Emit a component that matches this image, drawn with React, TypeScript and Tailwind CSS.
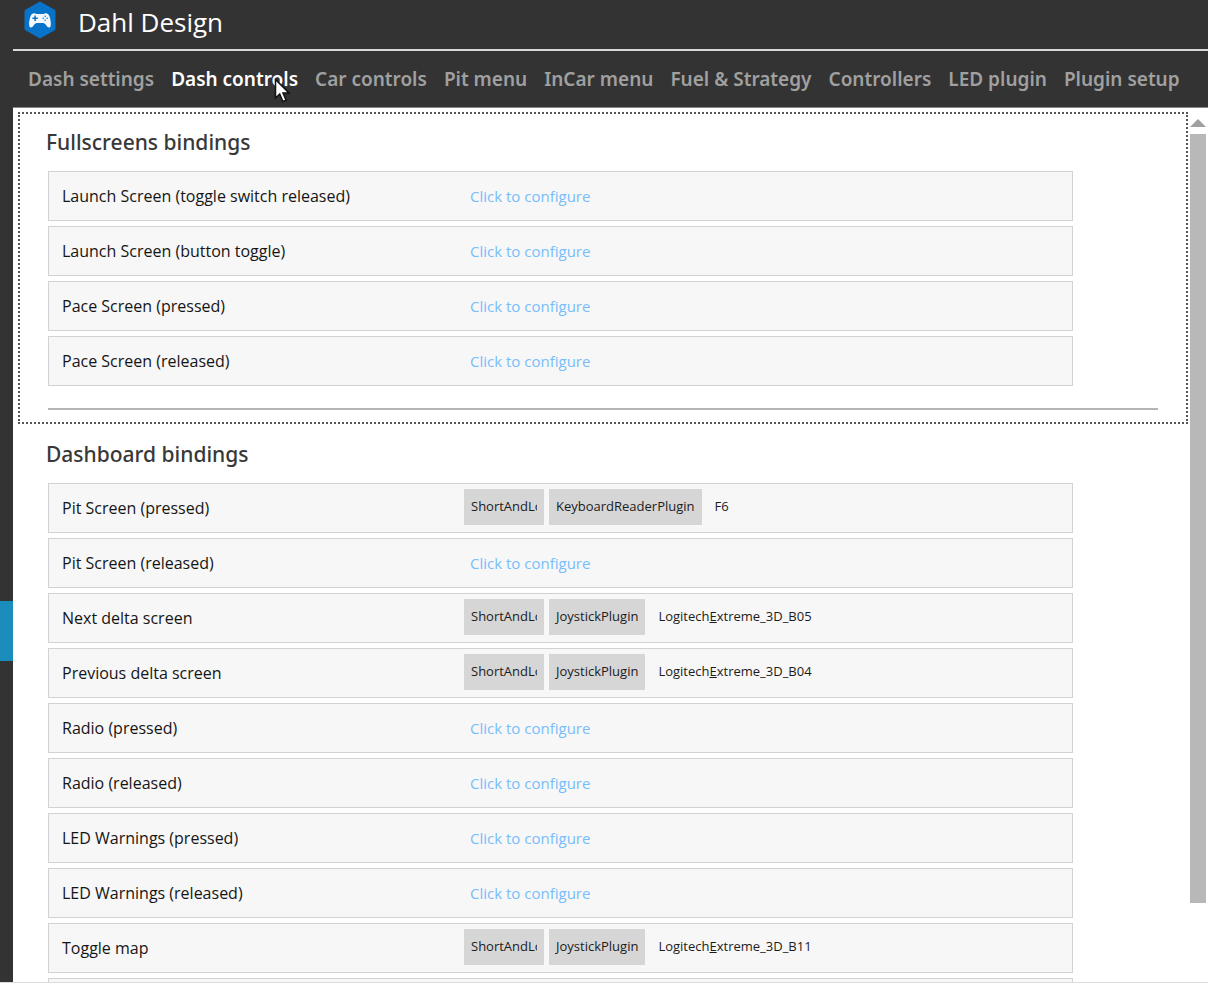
import type { ReactNode } from "react";

type Binding = { name: string; plugin?: string; input?: ReactNode };

const tabs = [
  "Dash settings",
  "Dash controls",
  "Car controls",
  "Pit menu",
  "InCar menu",
  "Fuel & Strategy",
  "Controllers",
  "LED plugin",
  "Plugin setup",
];

const joystick = (button: string) => (
  <>
    Logitech<u className="underline-offset-1">E</u>xtreme_3D_{button}
  </>
);

const fullscreens: Binding[] = [
  { name: "Launch Screen (toggle switch released)" },
  { name: "Launch Screen (button toggle)" },
  { name: "Pace Screen (pressed)" },
  { name: "Pace Screen (released)" },
];

const dashboard: Binding[] = [
  { name: "Pit Screen (pressed)", plugin: "KeyboardReaderPlugin", input: "F6" },
  { name: "Pit Screen (released)" },
  { name: "Next delta screen", plugin: "JoystickPlugin", input: joystick("B05") },
  { name: "Previous delta screen", plugin: "JoystickPlugin", input: joystick("B04") },
  { name: "Radio (pressed)" },
  { name: "Radio (released)" },
  { name: "LED Warnings (pressed)" },
  { name: "LED Warnings (released)" },
  { name: "Toggle map", plugin: "JoystickPlugin", input: joystick("B11") },
];

function Logo() {
  return (
    <svg viewBox="0 0 32 38" className="h-[38px] w-8" aria-hidden="true">
      <path d="M16 1 31 9.500V28.500L16 37 1 28.500V9.500Z" fill="#0873c9" stroke="#0873c9" strokeLinejoin="round" />
      <g transform="translate(-1.300 -1.100) scale(1.080)">
        <path
          d="M10.500 12.300c1.300 0 1.700.7 2.600.7h5.800c.9 0 1.300-.7 2.600-.7 2.300 0 3.200 2 3.900 5 .7 3.200.9 5.300.4 7-.4 1.500-1.900 1.700-3 .6-1.300-1.400-2.200-3.500-3.700-3.500h-6.200c-1.500 0-2.400 2.100-3.700 3.500-1.100 1.100-2.600.9-3-.6-.5-1.700-.3-3.800.4-7 .7-3 1.600-5 3.900-5Z"
          fill="#f2f8fd"
        />
        <path d="M11.500 14.500v5M9 17h5" stroke="#0873c9" strokeWidth="1.400" />
        <g fill="#0873c9">
          <circle cx="20.800" cy="15.200" r=".7" />
          <circle cx="20.800" cy="18.800" r=".7" />
          <circle cx="19" cy="17" r=".7" />
          <circle cx="22.600" cy="17" r=".7" />
        </g>
      </g>
    </svg>
  );
}

function Pointer() {
  return (
    <svg viewBox="0 0 17 26" className="pointer-events-none absolute top-[13px] left-[103px] h-[26px] w-[17px]" aria-hidden="true">
      <path d="M1.500 1.500V20l4.200-4 3.200 7.500 3.200-1.400L9 15h6Z" fill="#fff" stroke="#111" strokeWidth="1.500" />
    </svg>
  );
}

function BindingRow({ binding }: { binding: Binding }) {
  return (
    <li className="flex h-[50px] items-center border border-[#d2d2d2] bg-[#f7f7f7] pl-[13px]">
      <span className="w-[402px] shrink-0 text-base text-[#151515]">{binding.name}</span>
      {binding.plugin ? (
        <button type="button" className="mb-[2px] flex items-center text-[13px] whitespace-nowrap text-[#1c1c1c]">
          <span className="mr-[5px] flex h-9 w-20 bg-[#d6d6d6] px-[7px] pt-2">
            <span className="overflow-hidden">ShortAndLo</span>
          </span>
          <span className="h-9 bg-[#d6d6d6] px-[7px] pt-2">{binding.plugin}</span>
          <span className="h-9 px-[13px] pt-2">{binding.input}</span>
        </button>
      ) : (
        <button type="button" className="ml-[6px] text-[15px] text-[#78bdfb]">
          Click to configure
        </button>
      )}
    </li>
  );
}

function Bindings({ title, items }: { title: string; items: Binding[] }) {
  return (
    <>
      <h2 className="font-['Noto_Sans',sans-serif] text-[21px] leading-7 font-medium text-[#383838]">{title}</h2>
      <ul className="mt-[15px] mr-[113px] ml-[2px] flex flex-col gap-[5px]">
        {items.map((item) => (
          <BindingRow key={item.name} binding={item} />
        ))}
      </ul>
    </>
  );
}

export default function App() {
  return (
    <div className="flex h-screen flex-col bg-white pb-1 font-['Open_Sans','Noto_Sans',sans-serif]">
      <div className="flex min-h-0 flex-1 border-b border-[#dcdcdc] bg-[#333333]">
        <aside className="flex w-[13px] shrink-0 flex-col">
          <div className="mt-[601px] h-[60px] bg-[#1b8dbd]" />
        </aside>
        <div className="flex min-w-0 flex-1 flex-col">
          <header className="flex h-[51px] shrink-0 items-start gap-[22px] border-b-2 border-[#d8d8d8] pt-px pl-[11px]">
            <Logo />
            <h1 className="text-[26px] leading-[42px] text-white">Dahl Design</h1>
          </header>
          <nav className="flex h-[57px] shrink-0 items-center gap-[17px] border-b border-[#888888] pl-[15px] font-['Noto_Sans',sans-serif] text-[19px] font-semibold whitespace-nowrap text-[#a0a0a0]">
            {tabs.map((tab) => (
              <div key={tab} className="relative">
                <button type="button" className={tab === "Dash controls" ? "text-white" : ""}>
                  {tab}
                </button>
                {tab === "Dash controls" && <Pointer />}
              </div>
            ))}
          </nav>
          <div className="flex min-h-0 flex-1 bg-white">
            <main className="min-w-0 flex-1 overflow-hidden pt-1 pl-[5px]">
              <section className="mr-[1px] border-2 border-dotted border-[#555555] pt-[14px] pr-0 pb-3 pl-[26px]">
                <Bindings title="Fullscreens bindings" items={fullscreens} />
                <hr className="mt-[22px] mr-[28px] ml-[2px] border-t-2 border-[#b5b5b5]" />
              </section>
              <section className="mr-[1px] border-x-2 border-transparent pt-4 pl-[26px]">
                <Bindings title="Dashboard bindings" items={dashboard} />
                <div className="mt-[5px] mr-[113px] ml-[2px] h-[50px] border border-[#d2d2d2] bg-[#f7f7f7]" />
              </section>
            </main>
            <div className="flex w-[19px] shrink-0 flex-col items-center pt-[11px] pr-px">
              <svg viewBox="0 0 16 8" className="h-2 w-4" aria-hidden="true">
                <path d="M8 0 16 8H0Z" fill="#a0a0a0" />
              </svg>
              <div className="mt-[7px] mb-[79px] w-4 flex-1 bg-[#b8b8b8]" />
            </div>
          </div>
        </div>
      </div>
    </div>
  );
}
